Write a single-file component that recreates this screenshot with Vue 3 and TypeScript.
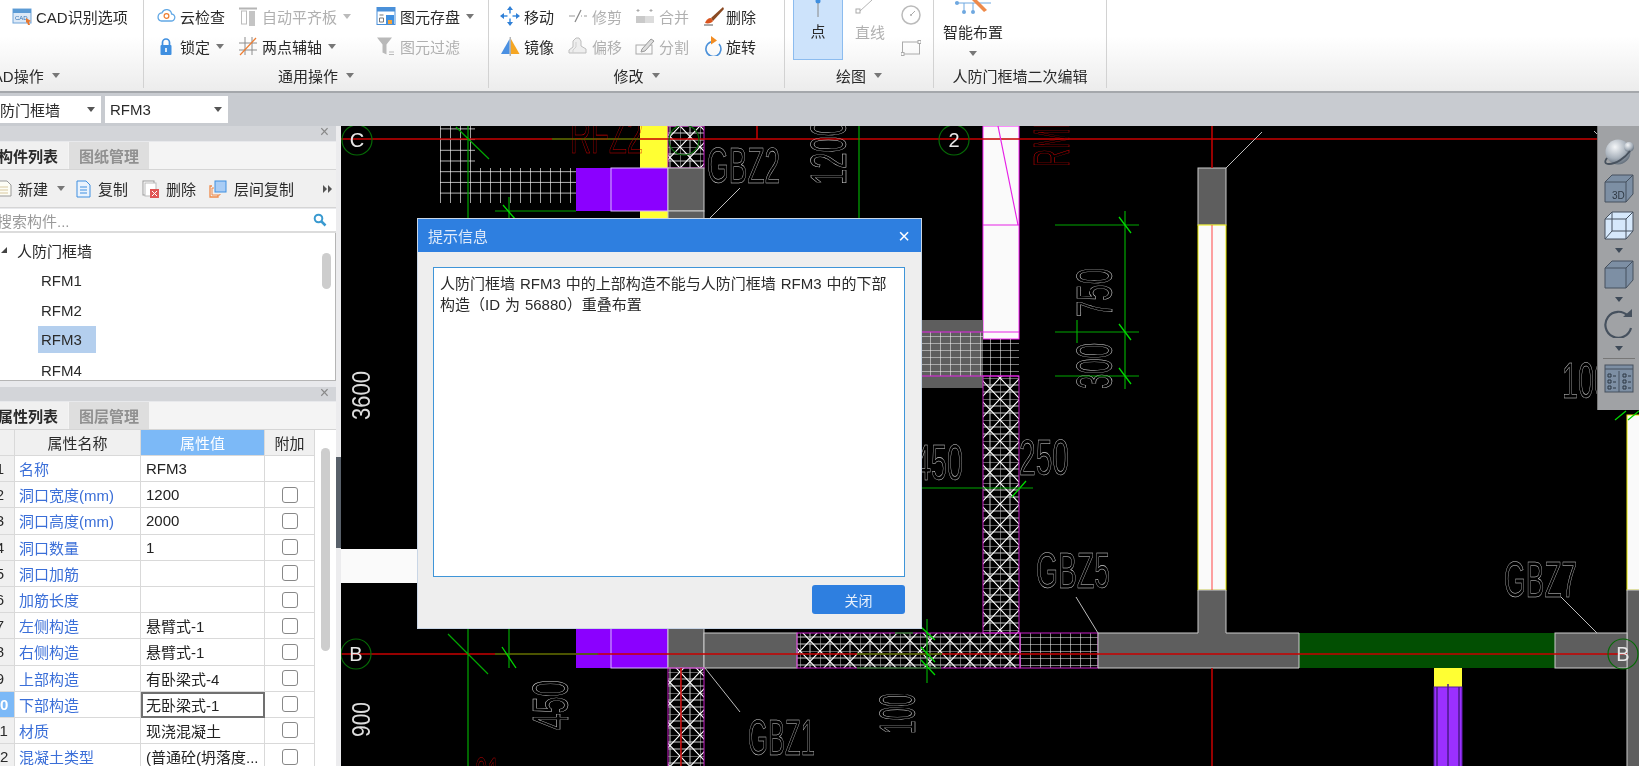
<template>
  <div class="app">
    <!-- 顶部功能区 -->
    <div class="ribbon">
      <div class="group group-cad">
        <div class="group-body cad-body">
          <div class="tool">
            <svg width="20" height="20" viewBox="0 0 20 20"><rect x="1" y="3" width="18" height="14" fill="#dce9f7" stroke="#6fa3d8" /><rect x="1" y="3" width="18" height="4" fill="#5b9bd5" /><text x="3" y="14" font-size="6" fill="#2f6fb0" font-family="Liberation Sans">CAD</text><path d="M14 12l5 3-2 1 1 3-2 0-1-3-1 1z" fill="#e8762c" /></svg>
            <span>CAD识别选项</span>
          </div>
        </div>
        <div class="group-label cad-label-row"><span>CAD操作</span><i class="caret" /></div>
      </div>

      <div class="group group-common">
        <div class="group-body common-grid">
          <div class="tool">
            <svg width="20" height="20" viewBox="0 0 20 20"><path d="M5 15h10a3.5 3.5 0 0 0 .6-7 5 5 0 0 0-9.6-1.2A4.2 4.2 0 0 0 5 15z" fill="#fff" stroke="#62a8e5" stroke-width="1.3" /><circle cx="10.5" cy="10" r="2.4" fill="none" stroke="#ee7d31" stroke-width="1.2" /></svg>
            <span>云检查</span>
          </div>
          <div class="tool off">
            <svg width="20" height="20" viewBox="0 0 20 20"><path d="M1 2.5h18" stroke="#b5b5b5" stroke-width="2" /><rect x="3.5" y="5" width="5" height="13" fill="#fff" stroke="#bbb" /><rect x="11" y="5" width="6" height="15" fill="#c4c4c4" /></svg>
            <span>自动平齐板</span><i class="caret pale" />
          </div>
          <div class="tool store">
            <svg width="20" height="20" viewBox="0 0 20 20"><rect x="1" y="1.5" width="18" height="17" fill="#fff" stroke="#4a90d9" /><rect x="1" y="1.5" width="18" height="4" fill="#4a90d9" /><path d="M3.5 9h4M3.5 12h4v4h-4z" fill="none" stroke="#777" /><rect x="10" y="9" width="8" height="9" fill="#3f8fe0" /><rect x="12" y="14" width="4" height="4" fill="#f2a33a" /></svg>
            <span>图元存盘</span><i class="caret" />
          </div>
          <div class="tool">
            <svg width="20" height="20" viewBox="0 0 20 20"><path d="M6.5 10V6.5a3.5 3.5 0 0 1 7 0V10" fill="none" stroke="#3f8fe0" stroke-width="1.7" /><rect x="4.5" y="9" width="11" height="10" rx="1" fill="#3f8fe0" /><rect x="9.2" y="12" width="1.6" height="4" fill="#fff" /></svg>
            <span>锁定</span><i class="caret" />
          </div>
          <div class="tool">
            <svg width="20" height="20" viewBox="0 0 20 20"><path d="M7 1v18M14 1v18M1 7h18M1 14h18" stroke="#8c8c8c" /><path d="M2 19L18 2" stroke="#ee7d31" stroke-width="1.2" /></svg>
            <span>两点辅轴</span><i class="caret" />
          </div>
          <div class="tool off store">
            <svg width="20" height="20" viewBox="0 0 20 20"><path d="M1 1.5h15l-5.5 7v10l-4-2v-8z" fill="#b9b9b9" /><path d="M13 16h5M13 18.5h5" stroke="#bbb" /></svg>
            <span>图元过滤</span>
          </div>
        </div>
        <div class="group-label"><span>通用操作</span><i class="caret" /></div>
      </div>

      <div class="group group-edit">
        <div class="group-body edit-grid">
          <div class="tool">
            <svg width="20" height="20" viewBox="0 0 20 20"><path d="M10 3.5v4M10 12.5v4M3.5 10h4M12.5 10h4" stroke="#3f8fe0" stroke-width="1.5" /><path d="M10 0l3 4H7zM10 20l3-4H7zM0 10l4-3v6zM20 10l-4-3v6z" fill="#2f7fd6" /></svg>
            <span>移动</span>
          </div>
          <div class="tool off">
            <svg width="20" height="20" viewBox="0 0 20 20"><path d="M1 10h6M13 10h1M16 10h3" stroke="#999" /><path d="M7 16l6-12" stroke="#888" stroke-width="1.2" /></svg>
            <span>修剪</span>
          </div>
          <div class="tool off">
            <svg width="20" height="20" viewBox="0 0 20 20"><path d="M3 3v3M1.500 4.500h3M16 3v3M14.500 4.500h3" stroke="#aaa" /><rect x="1" y="10" width="9" height="7" fill="#c9c9c9" /><rect x="10" y="10" width="9" height="7" fill="#dcdcdc" /></svg>
            <span>合并</span>
          </div>
          <div class="tool">
            <svg width="24" height="20" viewBox="0 0 24 20"><path d="M21 1L9 12l2 3 11-12z" fill="#8a4a22" /><path d="M9 12c-3 0-5 2-6 5 3 1 7 0 8-2z" fill="#d9541e" /><path d="M2 19h9" stroke="#555" /></svg>
            <span>删除</span>
          </div>
          <div class="tool">
            <svg width="20" height="20" viewBox="0 0 20 20"><path d="M9.500 3v15L1 18z" fill="#4a90e2" /><path d="M11 3v15l8.500 0z" fill="#f5a623" /><path d="M10.200 1v19" stroke="#777" stroke-width=".8" /></svg>
            <span>镜像</span>
          </div>
          <div class="tool off">
            <svg width="20" height="20" viewBox="0 0 20 20"><path d="M1 17v-3l4-3V5l3-3h3l2 3v5l5 3v4z" fill="#eee" stroke="#bdbdbd" /><path d="M5 17v-3l3-3V6" fill="none" stroke="#cfcfcf" /></svg>
            <span>偏移</span>
          </div>
          <div class="tool off">
            <svg width="20" height="20" viewBox="0 0 20 20"><rect x="1" y="9" width="16" height="9" fill="none" stroke="#aaa" /><path d="M7 13l9-10 3 2-9 10-4 1z" fill="#ddd" stroke="#999" /></svg>
            <span>分割</span>
          </div>
          <div class="tool">
            <svg width="24" height="20" viewBox="0 0 24 20"><path d="M11.500 3.500A7.500 7.500 0 1 0 17 6" fill="none" stroke="#4a90d9" stroke-width="1.600" transform="translate(0 2)" /><path d="M9 0l6 4.500-6 4z" fill="#f28c22" /></svg>
            <span>旋转</span>
          </div>
        </div>
        <div class="group-label"><span>修改</span><i class="caret" /></div>
      </div>

      <div class="group group-draw">
        <div class="group-body draw-body">
          <div class="draw-point">
            <svg width="8" height="18" viewBox="0 0 8 18"><circle cx="4" cy="1" r="2.500" fill="#3f8fe0" /><path d="M4 3v14" stroke="#888" /></svg>
            <span>点</span>
          </div>
          <div class="draw-line off">
            <svg width="28" height="14" viewBox="0 0 28 14"><path d="M5 11L17 0" stroke="#b5b5b5" /><rect x="1" y="9" width="4" height="4" fill="#fff" stroke="#aaa" /></svg>
            <span>直线</span>
          </div>
          <div class="draw-small">
            <svg width="20" height="20" viewBox="0 0 20 20"><circle cx="10" cy="10" r="9" fill="none" stroke="#bbb" stroke-width="1.500" /><path d="M10 10l4-4" stroke="#aaa" /><circle cx="10" cy="10" r="1" fill="#aaa" /></svg>
            <svg width="20" height="16" viewBox="0 0 20 16"><rect x="1.500" y="2" width="17" height="12" fill="none" stroke="#aaa" /><rect x="0" y="12.500" width="3" height="3" fill="#fff" stroke="#aaa" /><rect x="17" y="0.500" width="3" height="3" fill="#fff" stroke="#aaa" /></svg>
          </div>
        </div>
        <div class="group-label"><span>绘图</span><i class="caret" /></div>
      </div>

      <div class="group group-smart">
        <div class="group-body smart-body">
          <svg width="38" height="14" viewBox="0 0 38 14"><path d="M1 3h36M10 3v8M19 3v8" stroke="#6fa8e0" /><circle cx="3" cy="3" r="2" fill="#6fa8e0" /><circle cx="10" cy="12" r="2" fill="#6fa8e0" /><circle cx="19" cy="12" r="2" fill="#6fa8e0" /><path d="M18 0l12 12 3-2L23 0z" fill="#ee8a4a" /></svg>
          <span class="smart-text">智能布置</span>
          <i class="caret" />
        </div>
        <div class="group-label"><span>人防门框墙二次编辑</span></div>
      </div>
    </div>

    <!-- 构件选择栏 -->
    <div class="subbar">
      <div class="select select-type"><span>人防门框墙</span><i class="caret dark" /></div>
      <div class="select select-name"><span>RFM3</span><i class="caret dark" /></div>
    </div>

    <div class="main">
      <aside class="side">
        <section class="pane pane-top">
          <div class="pane-head"><span class="x">×</span></div>
          <div class="tabs">
            <div class="tab on">构件列表</div>
            <div class="tab">图纸管理</div>
          </div>
          <div class="pane-tools">
            <div class="ptool w1">
              <svg width="15" height="17" viewBox="0 0 15 17"><path d="M1 1h9l4 4v11H1z" fill="#fdfdf5" stroke="#999" /><path d="M3 7h8M3 10h8M3 13h8" stroke="#d9c9a0" /></svg>
              <span>新建</span><i class="caret" />
            </div>
            <div class="ptool w2">
              <svg width="15" height="18" viewBox="0 0 15 18"><path d="M1 1h9l4 4v12H1z" fill="#eaf3fd" stroke="#3f8fe0" /><path d="M4 7h7M4 10h7M4 13h7" stroke="#3f8fe0" /></svg>
              <span>复制</span>
            </div>
            <div class="ptool w3">
              <svg width="17" height="18" viewBox="0 0 17 18"><rect x="1" y="1" width="11" height="14" fill="#fff" stroke="#999" /><rect x="3" y="3" width="11" height="13" fill="#fff" stroke="#bbb" /><rect x="8" y="9" width="9" height="9" fill="#e05555" /><path d="M10 11l5 5M15 11l-5 5" stroke="#fff" /></svg>
              <span>删除</span>
            </div>
            <div class="ptool w4">
              <svg width="18" height="18" viewBox="0 0 18 18"><path d="M3 6H1v11h8v-2" fill="none" stroke="#ee8a4a" stroke-width="1.300" /><path d="M5 8H3v7h8v-1" fill="none" stroke="#ee8a4a" /><rect x="6" y="1" width="11" height="11" fill="#a9cdf5" stroke="#3f8fe0" /></svg>
              <span>层间复制</span>
            </div>
            <svg class="more" width="9" height="8" viewBox="0 0 9 8"><path d="M0 0l4 4-4 4zM5 0l4 4-4 4z" fill="#555" /></svg>
          </div>
          <div class="search">
            <span>搜索构件...</span>
            <svg width="14" height="14" viewBox="0 0 14 14"><circle cx="5.500" cy="5.500" r="3.800" fill="none" stroke="#3a9ad0" stroke-width="2" /><path d="M8.500 8.500l4 4" stroke="#3a9ad0" stroke-width="2.500" /></svg>
          </div>
          <div class="tree">
            <div class="tree-root"><i class="tree-arrow" />人防门框墙</div>
            <div
              v-for="item in treeItems"
              :key="item"
              class="tree-item"
              :class="{ active: item === 'RFM3' }"
            >
              {{ item }}
            </div>
            <div class="tree-thumb" />
          </div>
        </section>

        <section class="pane pane-bottom">
          <div class="pane-head"><span class="x">×</span></div>
          <div class="tabs">
            <div class="tab on">属性列表</div>
            <div class="tab">图层管理</div>
          </div>
          <div class="props">
            <div class="props-table">
              <div class="prow phead">
                <div class="cell no" />
                <div class="cell name-h">属性名称</div>
                <div class="cell value-h">属性值</div>
                <div class="cell extra-h">附加</div>
              </div>
              <div
                v-for="row in propRows"
                :key="row.no"
                class="prow"
              >
                <div
                  class="cell no"
                  :class="{ sel: row.no === 10 }"
                >
                  {{ row.no }}
                </div>
                <div class="cell name">{{ row.name }}</div>
                <div
                  class="cell value"
                  :class="{ editing: row.no === 10 }"
                >
                  {{ row.value }}
                </div>
                <div class="cell extra"><i
                  v-if="row.no !== 1"
                  class="check"
                /></div>
              </div>
            </div>
            <div class="props-scroll"><div class="props-thumb" /></div>
          </div>
        </section>
      </aside>

      <div class="splitter"><div class="splitter-handle" /></div>

      <div class="canvas">
        <svg
          class="cad"
          viewBox="341 126 1298 640"
          width="1298"
          height="640"
        >
          <defs>
            <pattern
              id="grid"
              width="10"
              height="7"
              patternUnits="userSpaceOnUse"
            >
              <path
                d="M0 0V7M0 0H10"
                stroke="#f4f4f4"
                stroke-width="1.100"
                fill="none"
              />
            </pattern>
            <pattern
              id="grid-big"
              width="10"
              height="10.700"
              patternUnits="userSpaceOnUse"
            >
              <path
                d="M0 0V10.700M0 0H10"
                stroke="#f4f4f4"
                stroke-width="1.300"
                fill="none"
              />
            </pattern>
            <pattern
              id="cross"
              width="20"
              height="21"
              patternUnits="userSpaceOnUse"
            >
              <path
                d="M0 0H20M0 7H20M0 14H20M0 0V21M10 0V21"
                stroke="#c8c8c8"
                fill="none"
              />
              <path
                d="M0 0L20 21M20 0L0 21"
                stroke="#fff"
                stroke-width="1.200"
                fill="none"
              />
            </pattern>
          </defs>

          <rect
            x="341"
            y="126"
            width="1298"
            height="640"
            fill="#000"
          />

          <rect
            v-for="(r, i) in cadRects"
            :key="'r' + i"
            :x="r.x"
            :y="r.y"
            :width="r.w"
            :height="r.h"
            :fill="r.fill"
            :stroke="r.stroke || 'none'"
          />

          <!-- 墙体灰色 T 形 -->
          <path
            d="M1198 590h28v43h73v35H1098v-35h100z"
            fill="#5e5e5e"
            stroke="#ccc"
          />
          <path
            d="M1437 687v79M1448 684v82M1459 687v79"
            stroke="#4b1a8c"
            stroke-width="1.500"
          />

          <path
            :d="segPath(redLines)"
            stroke="#c80000"
            stroke-width="1.500"
            fill="none"
          />
          <path
            :d="segPath(wallRedLines)"
            stroke="#ff4444"
            fill="none"
          />
          <path
            :d="segPath(magentaLines)"
            stroke="#e622e6"
            stroke-width="1.200"
            fill="none"
          />
          <path
            :d="segPath(greenLines)"
            stroke="#00a800"
            stroke-width="1.200"
            fill="none"
          />
          <path
            :d="segPath(tickLines)"
            stroke="#00d800"
            stroke-width="1.300"
            fill="none"
          />
          <path
            :d="segPath(leaderLines)"
            stroke="#bdbdbd"
            fill="none"
          />

          <g
            v-for="a in axisMarks"
            :key="a.x + a.label"
          >
            <circle
              :cx="a.x"
              :cy="a.y"
              r="15"
              fill="none"
              stroke="#066a06"
              stroke-width="1.200"
            />
            <text
              :x="a.x"
              :y="a.y + 7"
              text-anchor="middle"
              class="axis-text"
            >{{ a.label }}</text>
          </g>

          <text
            v-for="t in cadTexts"
            :key="t.text + t.x"
            class="cad-text"
            :x="t.x"
            :y="t.y"
            :font-size="t.size || 50"
            :textLength="t.len"
            lengthAdjust="spacingAndGlyphs"
            :fill="t.solid ? '#ddd' : 'none'"
            :stroke="t.solid ? 'none' : t.color || '#d4d4d4'"
            :transform="t.rot ? `rotate(-90 ${t.x} ${t.y})` : undefined"
          >{{ t.text }}</text>
        </svg>

        <!-- 提示信息弹窗 -->
        <div class="dialog">
          <div class="dialog-title">
            <span>提示信息</span>
            <span class="dialog-close">×</span>
          </div>
          <div class="dialog-body">
            <div class="dialog-text">
              人防门框墙 RFM3 中的上部构造不能与人防门框墙 RFM3 中的下部<br>构造（ID 为 56880）重叠布置
            </div>
            <div class="dialog-foot">
              <button class="dialog-btn">关闭</button>
            </div>
          </div>
        </div>

        <!-- 右侧视图工具条 -->
        <div class="viewbar">
          <svg width="32" height="28" viewBox="0 0 32 28"><defs><radialGradient id="ball" cx=".38" cy=".3" r=".75"><stop offset="0" stop-color="#f4f6f8" /><stop offset=".6" stop-color="#a9b2bc" /><stop offset="1" stop-color="#5c6875" /></radialGradient></defs><circle cx="15" cy="14" r="12.500" fill="url(#ball)" /><circle cx="26" cy="9" r="5" fill="url(#ball)" /><path d="M4 20C1 24 2 26 6 26 13 26 22 20 27 13" fill="none" stroke="#48525e" stroke-width="1.800" /></svg>
          <svg width="30" height="29" viewBox="0 0 30 29"><path d="M1 8l7-7h21v19l-7 8H1z" fill="#7d8fa4" stroke="#46515e" /><path d="M1 8h21v20M22 8l7-7" fill="none" stroke="#46515e" /><text x="8" y="25" font-size="10" fill="#2f3944" font-family="Liberation Sans">3D</text></svg>
          <svg width="30" height="29" viewBox="0 0 30 29"><path d="M1 8l7-7h21v19l-7 8H1z" fill="#d6e8fb" stroke="#46515e" /><path d="M1 8h21v20M22 8l7-7M8 1v19h21M8 20l-7 8" fill="none" stroke="#46515e" /></svg>
          <i class="caret bar-caret" />
          <svg width="30" height="29" viewBox="0 0 30 29"><path d="M1 8l7-7h21v19l-7 8H1z" fill="#7d8fa4" stroke="#46515e" /><path d="M1 8h21v20M22 8l7-7" fill="none" stroke="#46515e" /></svg>
          <i class="caret bar-caret" />
          <svg width="30" height="29" viewBox="0 0 30 29"><path d="M24 7A13 13 0 1 0 27 19" fill="none" stroke="#46515e" stroke-width="2.200" /><path d="M19 8h9V0z" fill="#46515e" /></svg>
          <i class="caret bar-caret" />
          <div class="bar-line" />
          <svg width="30" height="29" viewBox="0 0 30 29"><rect x="1" y="1" width="28" height="27" fill="#7d8fa4" stroke="#46515e" /><path d="M1 5h28M15 7v21" stroke="#46515e" /><path d="M4 10h3v3H4zM4 16h3v3H4zM4 22h3v3H4zM19 10h3v3h-3zM19 16h3v3h-3zM19 22h3v3h-3zM9 12h3M9 18h3M9 24h3M24 12h3M24 18h3M24 24h3" fill="none" stroke="#2f3944" /></svg>
        </div>
      </div>
    </div>
  </div>
</template>

<script setup lang="ts">
type Seg = [number, number, number, number]

interface PropRow {
  no: number
  name: string
  value: string
}

interface CadRect {
  x: number
  y: number
  w: number
  h: number
  fill: string
  stroke?: string
}

interface CadText {
  text: string
  x: number
  y: number
  len: number
  rot?: boolean
  size?: number
  color?: string
  solid?: boolean
}

const treeItems = ['RFM1', 'RFM2', 'RFM3', 'RFM4']

const propRows: PropRow[] = [
  { no: 1, name: '名称', value: 'RFM3' },
  { no: 2, name: '洞口宽度(mm)', value: '1200' },
  { no: 3, name: '洞口高度(mm)', value: '2000' },
  { no: 4, name: '洞口数量', value: '1' },
  { no: 5, name: '洞口加筋', value: '' },
  { no: 6, name: '加筋长度', value: '' },
  { no: 7, name: '左侧构造', value: '悬臂式-1' },
  { no: 8, name: '右侧构造', value: '悬臂式-1' },
  { no: 9, name: '上部构造', value: '有卧梁式-4' },
  { no: 10, name: '下部构造', value: '无卧梁式-1' },
  { no: 11, name: '材质', value: '现浇混凝土' },
  { no: 12, name: '混凝土类型', value: '(普通砼(坍落度...' }
]

const GRAY = '#5e5e5e'
const EDGE = '#cccccc'
const PINK = '#ff22ff'
const HATCH_EDGE = '#c81ec8'
const WHITE = '#fafafa'
const YELLOW = '#ffff33'

// 图面上的构件，坐标即屏幕坐标
const cadRects: CadRect[] = [
  { x: 341, y: 549, w: 77, h: 34, fill: WHITE },
  { x: 440, y: 126, w: 35, h: 77, fill: 'url(#grid-big)' },
  { x: 475, y: 168, w: 101, h: 35, fill: 'url(#grid-big)' },
  { x: 640, y: 126, w: 28, h: 42, fill: YELLOW },
  { x: 640, y: 211, w: 28, h: 12, fill: YELLOW },
  { x: 668, y: 126, w: 36, h: 42, fill: 'url(#cross)', stroke: HATCH_EDGE },
  { x: 576, y: 168, w: 35, h: 43, fill: '#8b00ff' },
  { x: 611, y: 168, w: 57, h: 43, fill: '#8b00ff', stroke: '#d8b8ff' },
  { x: 668, y: 168, w: 36, h: 43, fill: GRAY, stroke: EDGE },
  { x: 668, y: 211, w: 36, h: 12, fill: GRAY, stroke: EDGE },
  { x: 983, y: 126, w: 36, h: 213, fill: WHITE, stroke: PINK },
  { x: 915, y: 320, w: 68, h: 68, fill: GRAY },
  { x: 915, y: 332, w: 68, h: 44, fill: 'url(#grid)' },
  { x: 983, y: 339, w: 36, h: 37, fill: 'url(#grid)' },
  { x: 983, y: 376, w: 36, h: 257, fill: 'url(#cross)', stroke: HATCH_EDGE },
  { x: 1198, y: 168, w: 28, h: 57, fill: GRAY, stroke: EDGE },
  { x: 1198, y: 225, w: 28, h: 365, fill: WHITE, stroke: '#e8e800' },
  { x: 1627, y: 415, w: 14, h: 175, fill: WHITE, stroke: '#e8e800' },
  { x: 1627, y: 590, w: 14, h: 178, fill: GRAY, stroke: EDGE },
  { x: 576, y: 628, w: 35, h: 40, fill: '#8b00ff' },
  { x: 611, y: 620, w: 57, h: 48, fill: '#8b00ff', stroke: '#d8b8ff' },
  { x: 668, y: 620, w: 36, h: 48, fill: GRAY, stroke: EDGE },
  { x: 704, y: 633, w: 93, h: 35, fill: GRAY, stroke: EDGE },
  { x: 797, y: 633, w: 223, h: 35, fill: 'url(#cross)', stroke: HATCH_EDGE },
  { x: 1020, y: 633, w: 78, h: 35, fill: 'url(#grid)', stroke: HATCH_EDGE },
  { x: 668, y: 668, w: 36, h: 100, fill: 'url(#cross)', stroke: HATCH_EDGE },
  { x: 1299, y: 633, w: 256, h: 35, fill: '#024f02' },
  { x: 1555, y: 633, w: 72, h: 35, fill: GRAY, stroke: EDGE },
  { x: 1434, y: 668, w: 28, h: 19, fill: YELLOW },
  { x: 1434, y: 687, w: 28, h: 81, fill: '#9b30ff', stroke: '#5a1aa8' }
]

const redLines: Seg[] = [
  [341, 139, 1598, 139],
  [341, 654, 1627, 654],
  [757, 126, 757, 139],
  [1212, 126, 1212, 168],
  [1212, 668, 1212, 766],
  [681, 668, 681, 766]
]

const wallRedLines: Seg[] = [[1212, 225, 1212, 590]]

const magentaLines: Seg[] = [
  [998, 126, 1018, 225],
  [983, 225, 1019, 225],
  [915, 332, 1019, 332],
  [915, 376, 1019, 376]
]

const greenLines: Seg[] = [
  [468, 126, 468, 220],
  [859, 126, 859, 220],
  [468, 628, 468, 766],
  [509, 628, 509, 668],
  [495, 211, 576, 211],
  [509, 197, 509, 220],
  [552, 139, 640, 139],
  [456, 127, 489, 159],
  [448, 634, 488, 674],
  [495, 654, 598, 654],
  [857, 654, 942, 654],
  [857, 668, 941, 668],
  [895, 633, 913, 633],
  [927, 619, 927, 683],
  [1055, 225, 1139, 225],
  [1055, 332, 1139, 332],
  [1055, 376, 1139, 376],
  [1125, 211, 1125, 389],
  [1077, 320, 1077, 343],
  [921, 488, 1033, 488]
]

const tickLines: Seg[] = [
  [1119, 217, 1131, 233],
  [1119, 324, 1131, 340],
  [1119, 368, 1131, 384],
  [502, 647, 516, 668],
  [921, 627, 935, 640],
  [921, 647, 935, 662],
  [921, 660, 935, 675],
  [503, 205, 516, 220],
  [1012, 497, 1026, 481],
  [1615, 420, 1626, 411],
  [1628, 420, 1639, 411]
]

const leaderLines: Seg[] = [
  [740, 188, 710, 218],
  [1226, 168, 1262, 132],
  [1076, 597, 1098, 633],
  [1561, 597, 1597, 633],
  [705, 668, 740, 712],
  [1594, 131, 1602, 139]
]

const axisMarks = [
  { x: 357, y: 140, label: 'C' },
  { x: 954, y: 140, label: '2' },
  { x: 684, y: 140, label: '' },
  { x: 356, y: 654, label: 'B' },
  { x: 1623, y: 654, label: 'B' }
]

const cadTexts: CadText[] = [
  { text: 'RFZ2', x: 570, y: 153, len: 73, color: '#d80000' },
  { text: 'GBZ2', x: 707, y: 183, len: 73 },
  { text: '1200', x: 846, y: 185, len: 65, rot: true },
  { text: 'RMF3', x: 1069, y: 167, len: 68, rot: true, color: '#d80000' },
  { text: '750', x: 1112, y: 317, len: 49, rot: true },
  { text: '300', x: 1112, y: 389, len: 46, rot: true },
  { text: '450', x: 915, y: 480, len: 48 },
  { text: '250', x: 1019, y: 475, len: 50 },
  { text: 'GBZ5', x: 1036, y: 588, len: 74 },
  { text: 'GBZ7', x: 1504, y: 597, len: 73 },
  { text: 'GBZ1', x: 748, y: 755, len: 67 },
  { text: '450', x: 568, y: 730, len: 50, rot: true },
  { text: '100', x: 915, y: 734, len: 41, rot: true },
  { text: '100', x: 1562, y: 398, len: 48 },
  { text: '01', x: 475, y: 793, len: 25, color: '#d80000' },
  { text: '3600', x: 370, y: 420, len: 49, rot: true, size: 26, solid: true },
  { text: '900', x: 370, y: 737, len: 35, rot: true, size: 26, solid: true }
]

function segPath(segs: Seg[]): string {
  return segs.map(([x1, y1, x2, y2]) => `M${x1} ${y1}L${x2} ${y2}`).join('')
}
</script>

<style scoped>
.app {
  width: 100vw;
  height: 100vh;
  overflow: hidden;
  display: flex;
  flex-direction: column;
  font-family: "Liberation Sans", "Noto Sans CJK SC", sans-serif;
  font-size: 15px;
  color: #2a2a2a;
  background: #c8cbd0;
  filter: blur(0.45px);
}

/* 功能区 */
.ribbon {
  flex: none;
  height: 91px;
  display: flex;
  background: linear-gradient(#fff 0%, #fff 40%, #ececec 100%);
  border-bottom: 2px solid #a4a7ab;
}

.group {
  height: 88px;
  flex: none;
  display: flex;
  flex-direction: column;
  border-right: 1px solid #d2d2d2;
  box-sizing: border-box;
}

.group-cad {
  width: 164px;
  margin-left: -20px;
}

.group-common {
  width: 345px;
}

.group-edit {
  width: 296px;
}

.group-draw {
  width: 149px;
}

.group-smart {
  width: 173px;
}

.group-body {
  height: 63px;
  flex: none;
}

.group-label {
  flex: 1;
  display: flex;
  align-items: center;
  justify-content: center;
  gap: 8px;
  padding-bottom: 1px;
}

.cad-label-row {
  justify-content: flex-start;
  padding-left: 2px;
}

.cad-body {
  padding: 1px 0 0 32px;
}

.tool {
  height: 30px;
  display: flex;
  align-items: center;
  gap: 4px;
  white-space: nowrap;
}

.tool .caret {
  margin-left: 2px;
}

.off {
  color: #b0b0b0;
}

.caret {
  display: inline-block;
  flex: none;
  width: 0;
  height: 0;
  border-style: solid;
  border-width: 5px 4px 0;
  border-color: #777 transparent transparent;
}

.caret.pale {
  border-top-color: #bbb;
}

.caret.dark {
  border-top-color: #555;
}

.common-grid {
  display: grid;
  grid-template-columns: 82px 138px 1fr;
  grid-template-rows: 30px 30px;
  padding: 1px 0 0 12px;
}

.edit-grid {
  display: grid;
  grid-template-columns: 68px 67px 67px 1fr;
  grid-template-rows: 30px 30px;
  padding: 1px 0 0 11px;
}

.edit-grid .tool svg[width="24"] {
  margin-right: -4px;
}

.draw-body {
  display: flex;
  padding-left: 8px;
}

.draw-point {
  width: 50px;
  height: 60px;
  box-sizing: border-box;
  background: #cde3fb;
  border: 1px solid #8cbcef;
  border-top: 0;
  display: flex;
  flex-direction: column;
  align-items: center;
  gap: 2px;
}

.draw-line {
  width: 46px;
  margin-left: 12px;
  display: flex;
  flex-direction: column;
  gap: 7px;
}

.draw-small {
  display: flex;
  flex-direction: column;
  gap: 15px;
  padding-top: 5px;
  margin-left: 0;
}

.smart-body {
  width: 62px;
  margin-left: 8px;
  display: flex;
  flex-direction: column;
  align-items: center;
}

.smart-text {
  margin-top: 7px;
  white-space: nowrap;
}

.smart-body .caret {
  margin-top: 9px;
}

/* 构件选择栏 */
.subbar {
  flex: none;
  height: 33px;
  display: flex;
  align-items: center;
  gap: 4px;
  background: #c8cbd0;
}

.select {
  height: 27px;
  flex: none;
  display: flex;
  align-items: center;
  justify-content: space-between;
  background: #fff;
  box-sizing: border-box;
  padding: 0 6px 0 5px;
}

.select-type {
  width: 116px;
  margin-left: -15px;
  padding-left: 0;
}

.select-name {
  width: 123px;
}

/* 主体 */
.main {
  flex: 1;
  min-height: 0;
  display: flex;
}

.side {
  width: 336px;
  flex: none;
  display: flex;
  flex-direction: column;
  background: #e8e9ec;
  overflow: hidden;
}

.pane {
  flex: none;
  display: flex;
  flex-direction: column;
}

.pane-top {
  height: 255px;
  margin-bottom: 6px;
}

.pane-bottom {
  flex: 1;
  min-height: 0;
}

.pane-head {
  height: 15px;
  flex: none;
  background: #d3d5d9;
  position: relative;
}

.pane-bottom .pane-head {
  height: 14px;
}

.x {
  position: absolute;
  right: 7px;
  top: -3px;
  font-size: 16px;
  line-height: 18px;
  color: #888;
}

.tabs {
  flex: none;
  height: 27px;
  margin-top: 1px;
  display: flex;
  background: #f4f4f4;
  border-bottom: 1px solid #d5d5d5;
  box-sizing: content-box;
}

.tab {
  width: 80px;
  box-sizing: border-box;
  margin-left: 1px;
  display: flex;
  align-items: center;
  justify-content: center;
  background: #dedede;
  color: #909090;
  font-weight: 700;
}

.tab.on {
  width: 68px;
  margin-left: 0;
  background: #f0f0f0;
  color: #2a2a2a;
  justify-content: flex-start;
  text-indent: -2px;
}

.pane-tools {
  flex: none;
  height: 38px;
  display: flex;
  align-items: center;
  background: #f0f0f0;
  border-bottom: 1px solid #d5d5d5;
  box-sizing: border-box;
}

.ptool {
  flex: none;
  display: flex;
  align-items: center;
  gap: 7px;
  white-space: nowrap;
}

.w1 {
  width: 76px;
  margin-left: -3px;
  padding-left: 0;
  gap: 6px;
}

.w1 .caret {
  margin-left: 3px;
}

.w2 {
  margin-left: 3px;
  width: 66px;
}

.w3 {
  width: 67px;
}

.w4 {
  width: 114px;
}

.search {
  flex: none;
  height: 24px;
  margin-top: 1px;
  display: flex;
  align-items: center;
  justify-content: space-between;
  padding-right: 9px;
  background: #fff;
  border-bottom: 2px solid #dcdcdc;
  box-sizing: border-box;
  color: #9a9a9a;
  text-indent: -3px;
}

.tree {
  flex: 1;
  min-height: 0;
  position: relative;
  background: #fff;
  border-bottom: 1px solid #b5b5b5;
  border-right: 1px solid #b5b5b5;
  padding-top: 2px;
  overflow: hidden;
}

.tree-root {
  height: 30px;
  display: flex;
  align-items: center;
  padding-left: 17px;
  position: relative;
}

.tree-arrow {
  position: absolute;
  left: 1px;
  top: 12px;
  width: 0;
  height: 0;
  border-style: solid;
  border-width: 0 0 6px 6px;
  border-color: transparent transparent #444;
}

.tree-item {
  height: 30px;
  width: 58px;
  margin-left: 38px;
  padding-left: 3px;
  box-sizing: border-box;
  display: flex;
  align-items: center;
}

.tree-item.active {
  background: #b4cfee;
  height: 27px;
  margin: 1px 0 2px 38px;
}

.tree-thumb {
  position: absolute;
  right: 4px;
  top: 20px;
  width: 9px;
  height: 36px;
  border-radius: 5px;
  background: #cdcdcd;
}

/* 属性表 */
.props {
  flex: 1;
  min-height: 0;
  display: flex;
  background: #fff;
  overflow: hidden;
}

.props-table {
  width: 315px;
  flex: none;
  overflow: hidden;
}

.prow {
  width: 329px;
  margin-left: -14px;
  height: 26.2px;
  display: grid;
  grid-template-columns: 29px 126px 124px 50px;
}

.phead {
  height: 26px;
}

.cell {
  display: flex;
  align-items: center;
  box-sizing: border-box;
  border-right: 1px solid #d9d9d9;
  border-bottom: 1px solid #d9d9d9;
  white-space: nowrap;
  overflow: hidden;
}

.phead .cell {
  background: #f0f0f0;
  justify-content: center;
}

.phead .value-h {
  background: #7cb9f7;
  color: #fff;
}

.no {
  background: #f0f0f0;
  justify-content: center;
}

.no.sel {
  background: #7cb9f7;
  color: #fff;
  font-weight: 700;
}

.name {
  padding-left: 4px;
  color: #3b6fd8;
}

.value {
  padding-left: 5px;
  color: #222;
}

.value.editing {
  border: 2px solid #707070;
  padding-left: 3px;
}

.extra {
  justify-content: center;
}

.check {
  display: block;
  width: 16px;
  height: 16px;
  box-sizing: border-box;
  border: 1px solid #888;
  border-radius: 3px;
  background: #fff;
}

.props-scroll {
  flex: 1;
  position: relative;
}

.props-thumb {
  position: absolute;
  left: 6px;
  top: 18px;
  width: 9px;
  height: 203px;
  border-radius: 5px;
  background: #cdcdcd;
}

.splitter {
  flex: none;
  width: 5px;
  position: relative;
  background: #ececee;
}

.splitter-handle {
  position: absolute;
  left: 0;
  top: 331px;
  width: 5px;
  height: 91px;
  background: #58606a;
}

/* 图面 */
.canvas {
  flex: 1;
  min-width: 0;
  position: relative;
  overflow: hidden;
  background: #000;
}

.cad {
  display: block;
}

.cad-text {
  font-family: "Liberation Sans", sans-serif;
  stroke-width: 0.55;
}

.axis-text {
  font-family: "Liberation Sans", sans-serif;
  font-size: 20px;
  fill: #e8e8e8;
}

/* 弹窗 */
.dialog {
  position: absolute;
  left: 77px;
  top: 93px;
  width: 503px;
  height: 409px;
  display: flex;
  flex-direction: column;
  background: #eee;
  box-shadow: 0 0 0 1px #c9d6e6;
}

.dialog-title {
  height: 33px;
  flex: none;
  display: flex;
  align-items: center;
  justify-content: space-between;
  padding: 0 11px 0 10px;
  background: #2e7fe0;
  color: #dfeafa;
}

.dialog-close {
  color: #fff;
  font-size: 20px;
  line-height: 20px;
}

.dialog-body {
  flex: 1;
  min-height: 0;
  display: flex;
  flex-direction: column;
  padding: 15px 16px 14px 15px;
}

.dialog-text {
  height: 310px;
  flex: none;
  box-sizing: border-box;
  padding: 5px 6px;
  background: #fff;
  border: 1px solid #3f95d8;
  line-height: 21px;
  word-spacing: 0.8px;
  white-space: nowrap;
}

.dialog-foot {
  flex: 1;
  display: flex;
  justify-content: flex-end;
  align-items: flex-end;
}

.dialog-btn {
  width: 93px;
  height: 29px;
  border: 0;
  border-radius: 3px;
  background: #2e7fe0;
  color: #e6f0fc;
  font: inherit;
  font-size: 14px;
  padding: 0;
}

/* 视图工具条 */
.viewbar {
  position: absolute;
  right: 0;
  top: 0;
  width: 41px;
  height: 284px;
  padding-top: 12px;
  box-sizing: border-box;
  display: flex;
  flex-direction: column;
  align-items: center;
  background: #a0a2a5;
  box-shadow: -1px 0 0 #777;
}

.viewbar > svg {
  flex: none;
  margin-top: 8px;
}

.viewbar > svg:first-child {
  margin-top: 0;
}

.bar-caret {
  margin-top: 8px;
  border-top-color: #3e4a58;
}

.viewbar .bar-caret + svg {
  margin-top: 7px;
}

.bar-line {
  width: 32px;
  height: 1px;
  margin-top: 7px;
  background: #777;
}

.viewbar .bar-line + svg {
  margin-top: 5px;
}

.more {
  flex: none;
}
</style>

<style>
html,
body {
  margin: 0;
  overflow: hidden;
}
</style>
